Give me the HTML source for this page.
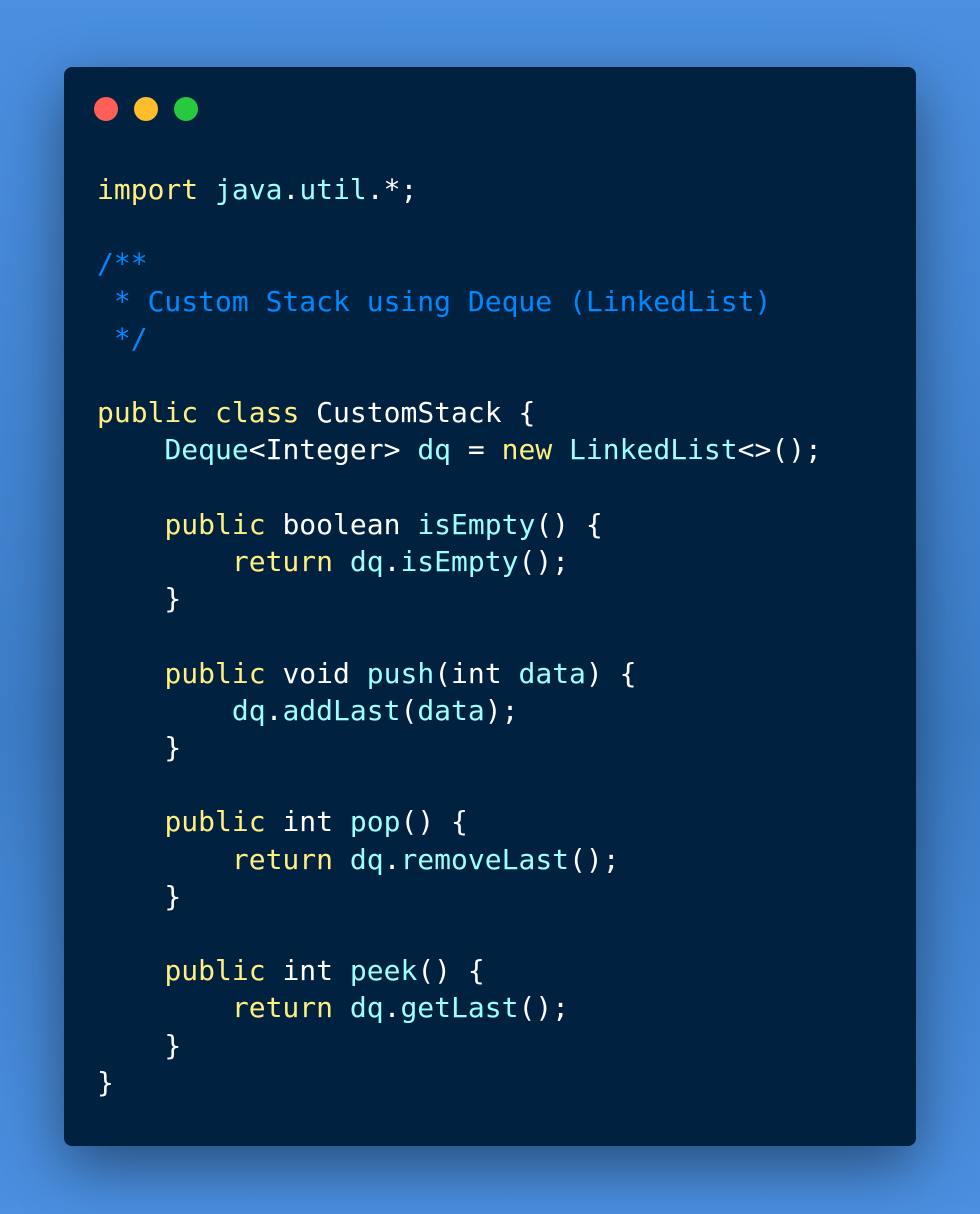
<!DOCTYPE html>
<html><head><style>
body{margin:0;width:980px;height:1214px;background:linear-gradient(180deg,#4a8fe0,#3c7dc8 60%,#4a8fe0);overflow:hidden;position:relative}
.win{position:absolute;left:64px;top:67px;width:852px;height:1079px;background:#002240;border-radius:8px;box-shadow:0 20px 60px rgba(0,0,0,.45)}
.dot{position:absolute;top:30px;width:24px;height:24px;border-radius:50%}
pre{position:absolute;left:33px;top:104px;margin:0;font-family:"DejaVu Sans Mono","Liberation Mono",monospace;font-size:28px;line-height:37.2px;color:#fff}
.k{color:#ffee80}.c{color:#9effff}.m{color:#0088ff}
</style></head><body>
<div class="win">
<div class="dot" style="left:30px;background:#ff5f56"></div>
<div class="dot" style="left:70px;background:#ffbd2e"></div>
<div class="dot" style="left:110px;background:#27c93f"></div>
<pre><span class="k">import</span> <span class="c">java</span>.<span class="c">util</span>.*;

<span class="m">/**
 * Custom Stack using Deque (LinkedList)
 */</span>

<span class="k">public</span> <span class="k">class</span> CustomStack {
    <span class="c">Deque</span>&lt;Integer&gt; <span class="c">dq</span> = <span class="k">new</span> <span class="c">LinkedList</span>&lt;&gt;();

    <span class="k">public</span> boolean <span class="c">isEmpty</span>() {
        <span class="k">return</span> <span class="c">dq</span>.<span class="c">isEmpty</span>();
    }

    <span class="k">public</span> void <span class="c">push</span>(int <span class="c">data</span>) {
        <span class="c">dq</span>.<span class="c">addLast</span>(<span class="c">data</span>);
    }

    <span class="k">public</span> int <span class="c">pop</span>() {
        <span class="k">return</span> <span class="c">dq</span>.<span class="c">removeLast</span>();
    }

    <span class="k">public</span> int <span class="c">peek</span>() {
        <span class="k">return</span> <span class="c">dq</span>.<span class="c">getLast</span>();
    }
}</pre>
</div>
</body></html>
